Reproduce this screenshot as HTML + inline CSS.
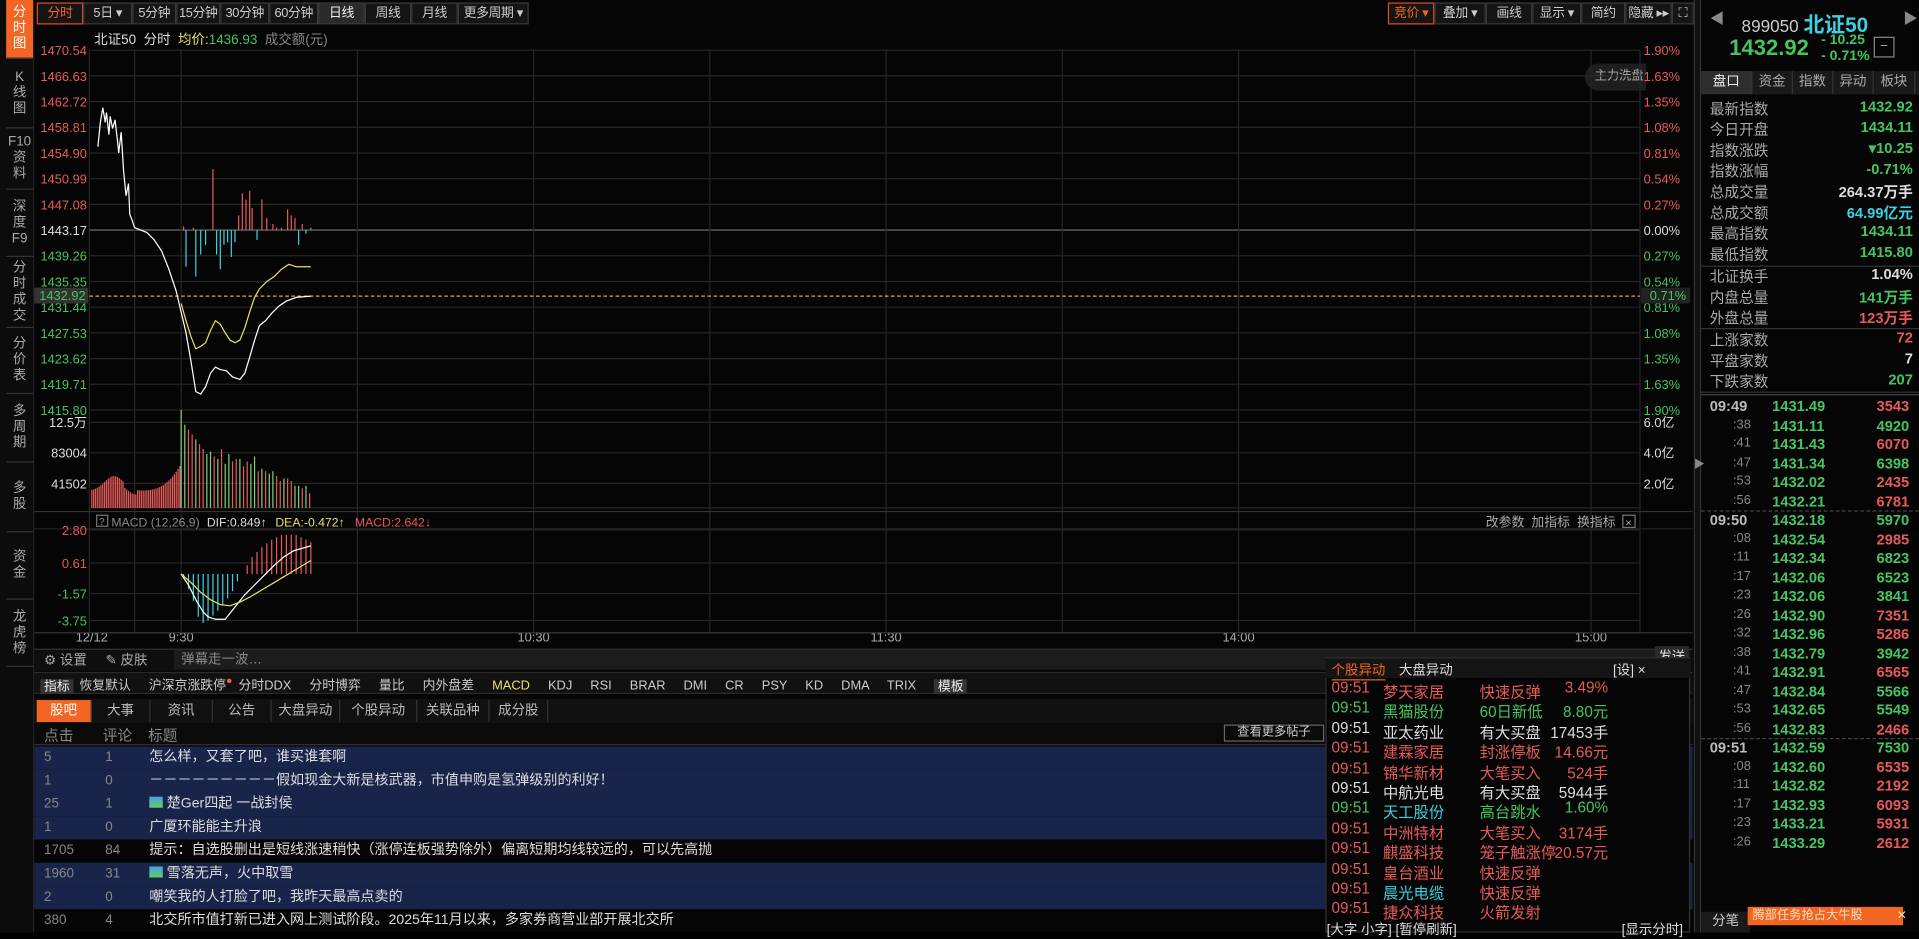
<!DOCTYPE html>
<html><head><meta charset="utf-8">
<style>
*{margin:0;padding:0;box-sizing:border-box}
html,body{width:1919px;height:933px;background:#000;overflow:hidden}
#s{position:absolute;left:0;top:0;width:1568px;height:762px;transform:scale(1.22385);transform-origin:0 0;background:#050505;font-family:"Liberation Sans","Noto Sans CJK SC",sans-serif;font-size:11px;color:#ccc}
.a{position:absolute;white-space:nowrap}
.btn{position:absolute;top:2px;height:18px;line-height:17px;border:1px solid #3a3a3a;background:#151515;color:#ccc;text-align:center;font-size:10.5px;white-space:nowrap;overflow:hidden;letter-spacing:-0.3px}
.side{position:absolute;left:5px;width:22px;border-bottom:1px solid #333;color:#aaa;text-align:center;font-size:11px;line-height:13px;display:flex;flex-direction:column;justify-content:center}
.r{color:#e65a5a}.g{color:#45c560}.w{color:#ddd}.c{color:#3dd0e0}.y{color:#e8e060}.gr{color:#888}
.row{position:absolute;left:28px;width:1355px;height:19px;line-height:19px}
.tab{position:absolute;top:572px;height:18px;line-height:18px;text-align:center;color:#bbb;border-right:1px solid #333}
.rt{position:absolute;top:58px;height:19px;line-height:19px;text-align:center;color:#aaa;border-right:1px solid #333}
</style></head><body><div id="s">
<div class="a" style="left:0;top:0;width:28px;height:762px;background:#0c0c0c;border-right:1px solid #222"></div>
<div class="side" style="top:0;height:48px;background:#f26522;color:#fff">分<br>时<br>图</div>
<div class="side" style="top:48px;height:57px">K<br>线<br>图</div>
<div class="side" style="top:105px;height:50px">F10<br>资<br>料</div>
<div class="side" style="top:155px;height:55px">深<br>度<br>F9</div>
<div class="side" style="top:210px;height:58px">分<br>时<br>成<br>交</div>
<div class="side" style="top:268px;height:54px">分<br>价<br>表</div>
<div class="side" style="top:322px;height:56px">多<br>周<br>期</div>
<div class="side" style="top:378px;height:57px">多<br>股</div>
<div class="side" style="top:435px;height:55px">资<br>金</div>
<div class="side" style="top:490px;height:55px">龙<br>虎<br>榜</div>
<div class="btn" style="left:30px;width:38px;border-color:#e04a2a;color:#f26522">分时</div>
<div class="btn" style="left:68px;width:40px">5日 ▾</div>
<div class="btn" style="left:108px;width:36px">5分钟</div>
<div class="btn" style="left:144px;width:36px">15分钟</div>
<div class="btn" style="left:180px;width:40px">30分钟</div>
<div class="btn" style="left:220px;width:40px">60分钟</div>
<div class="btn" style="left:260px;width:38px;background:#2a2a2a;color:#eee">日线</div>
<div class="btn" style="left:298px;width:38px">周线</div>
<div class="btn" style="left:336px;width:38px">月线</div>
<div class="btn" style="left:374px;width:58px">更多周期 ▾</div>
<div class="btn" style="left:1134px;width:38px;border-color:#e04a2a;color:#f26522">竞价 ▾</div>
<div class="btn" style="left:1172px;width:42px">叠加 ▾</div>
<div class="btn" style="left:1214px;width:38px">画线</div>
<div class="btn" style="left:1252px;width:40px">显示 ▾</div>
<div class="btn" style="left:1292px;width:36px">简约</div>
<div class="btn" style="left:1328px;width:38px">隐藏 ▸▸</div>
<div class="btn" style="left:1366px;width:18px">⛶</div>
<div class="a" style="left:77px;top:24px;color:#ddd">北证50 &nbsp;分时 &nbsp;<span class="y">均价:</span><span class="g">1436.93</span> &nbsp;<span class="gr">成交额(元)</span></div>
<div class="a" style="left:1295px;top:52px;width:50px;height:22px;border-radius:11px 0 0 11px;background:#1e1e1e;color:#aaa;line-height:22px;padding-left:8px;font-size:10px">主力洗盘</div>
<svg class="a" style="left:0;top:0" width="1390" height="535" id="ch"></svg>
<div class="a" style="left:28px;top:530px;width:1355px;height:18px;background:#0e0e0e;border-top:1px solid #333"></div>
<div class="a" style="left:36px;top:531px;color:#aaa">⚙ 设置 &nbsp;&nbsp;&nbsp; ✎ 皮肤</div>
<div class="a" style="left:142px;top:531px;width:1210px;height:16px;background:#1c1c1c;color:#888;padding-left:6px;line-height:16px">弹幕走一波…</div>
<div class="a" style="left:1352px;top:528px;width:28px;height:18px;background:#2a2a2a;color:#ddd;line-height:18px;text-align:center">发送</div>
<div class="a" style="left:28px;top:549px;width:1355px;height:18px;background:#111;border-top:1px solid #2a2a2a;border-bottom:1px solid #2a2a2a"></div>
<div class="a" style="left:33px;top:551px;font-size:10.5px;word-spacing:2px"><span style="background:#333;color:#eee;padding:0 3px">指标</span> 恢复默认 &nbsp; 沪深京涨跌停<sup class="r">●</sup> 分时DDX &nbsp; 分时博弈 &nbsp; 量比 &nbsp; 内外盘差 &nbsp; <span class="y">MACD</span> &nbsp; KDJ &nbsp; RSI &nbsp; BRAR &nbsp; DMI &nbsp; CR &nbsp; PSY &nbsp; KD &nbsp; DMA &nbsp; TRIX &nbsp; <span style="background:#333;color:#eee;padding:0 3px">模板</span></div>
<div class="a" style="left:1352px;top:551px;width:28px;height:14px;border-radius:7px;background:#f26522;color:#fff;font-size:10px;line-height:14px;padding-left:2px">弹 <span style="display:inline-block;width:10px;height:10px;border-radius:5px;background:#fff;vertical-align:-1px"></span></div>
<div class="a" style="left:28px;top:571px;width:1355px;height:20px;background:#111"></div>
<div class="tab" style="left:30px;width:45px;background:#f26522;color:#fff">股吧</div>
<div class="tab" style="left:75px;width:48px">大事</div>
<div class="tab" style="left:123px;width:51px">资讯</div>
<div class="tab" style="left:174px;width:48px">公告</div>
<div class="tab" style="left:222px;width:56px">大盘异动</div>
<div class="tab" style="left:278px;width:63px">个股异动</div>
<div class="tab" style="left:341px;width:59px">关联品种</div>
<div class="tab" style="left:400px;width:48px">成分股</div>
<div class="a" style="left:28px;top:591px;width:1355px;height:18px;background:#0a0a0a;border-bottom:1px solid #333"></div>
<div class="a gr" style="left:36px;top:592px;font-size:12px">点击</div>
<div class="a gr" style="left:84px;top:592px;font-size:12px">评论</div>
<div class="a gr" style="left:121px;top:592px;font-size:12px">标题</div>
<div class="a" style="left:1000px;top:592px;width:82px;height:14px;border:1px solid #666;color:#ccc;font-size:10px;line-height:12px;text-align:center">查看更多帖子</div>
<div class="a" style="left:1352px;top:591px;color:#aaa">表日↓</div>
<div id="posts"></div>
<div class="a" style="left:1370px;top:610px;width:10px;height:150px;background:#1a1a1a"></div>
<div class="a" style="left:1083px;top:537px;width:298px;height:225px;background:#050505;border:1px solid #333"></div>
<div class="a" style="left:1083px;top:538px;width:298px;height:16px;background:#141414"></div>
<div class="a" style="left:1088px;top:539px;color:#f26522;border-bottom:1px solid #f26522">个股异动</div>
<div class="a w" style="left:1143px;top:539px">大盘异动</div>
<div class="a w" style="left:1318px;top:539px">[设] ×</div>
<div id="pop"></div>
<div class="a w" style="left:1084px;top:751px;font-size:11px">[大字 小字] [暂停刷新]</div>
<div class="a w" style="left:1325px;top:751px;font-size:11px">[显示分时]</div>
<div class="a" style="left:1384px;top:0;width:6px;height:762px;background:#111;border-left:1px solid #333;border-right:1px solid #333"></div>
<div class="a gr" style="left:1384px;top:372px;font-size:9px">▶</div>
<div class="a gr" style="left:1397px;top:6px;font-size:12px">◀</div>
<div class="a gr" style="left:1555px;top:6px;font-size:12px">▶</div>
<div class="a" style="left:1423px;top:6px;font-size:14px;color:#ccc">899050 <span style="color:#3dd0e0;font-size:17px;font-weight:bold">北证50</span></div>
<div class="a g" style="left:1413px;top:29px;font-size:18px;font-weight:bold">1432.92</div>
<div class="a g" style="left:1488px;top:27px;font-size:11.5px;line-height:13px;font-weight:bold">- 10.25<br>- 0.71%</div>
<div class="a" style="left:1531px;top:30px;width:17px;height:17px;border:1px solid #888;color:#aaa;text-align:center;line-height:14px">−</div>
<div class="a" style="left:1390px;top:58px;width:178px;height:19px;background:#1a1a1a"></div>
<div class="rt" style="left:1390px;width:42px;background:#2e2e2e;color:#eee">盘口</div>
<div class="rt" style="left:1432px;width:33px">资金</div>
<div class="rt" style="left:1465px;width:33px">指数</div>
<div class="rt" style="left:1498px;width:33px">异动</div>
<div class="rt" style="left:1531px;width:34px">板块</div>
<div id="pk"></div>
<div id="tk"></div>
<div class="a" style="left:1390px;top:745px;width:40px;height:17px;background:#1a1a1a;color:#ccc;text-align:center;line-height:17px">分笔</div>
<div class="a" style="left:1428px;top:741px;width:127px;height:15px;background:#f26522;color:#ffe0c0;font-size:10px;line-height:15px;padding-left:4px">腾部任务抢占大牛股 &nbsp;&nbsp;&nbsp;&nbsp;&nbsp;&nbsp;&nbsp;&nbsp; ✕</div>
</div>
<script>
var R='#e65a5a',G='#45c560',C='#3dd0e0',W='#ddd',Y='#e8e060';
var ch=document.getElementById('ch'),h='';
function L(x1,y1,x2,y2,c,w,d){h+='<line x1="'+x1+'" y1="'+y1+'" x2="'+x2+'" y2="'+y2+'" stroke="'+c+'" stroke-width="'+(w||1)+'"'+(d?' stroke-dasharray="'+d+'"':'')+'/>';}
function T(x,y,t,c,a,s){h+='<text x="'+x+'" y="'+y+'" fill="'+c+'" font-size="'+(s||10.5)+'" text-anchor="'+(a||'start')+'" font-family="Liberation Sans,Noto Sans CJK SC,sans-serif">'+t+'</text>';}
var gc='#262626';
var pl=['1470.54','1466.63','1462.72','1458.81','1454.90','1450.99','1447.08','1443.17','1439.26','1435.35','1431.44','1427.53','1423.62','1419.71','1415.80'];
var pp=['1.90%','1.63%','1.35%','1.08%','0.81%','0.54%','0.27%','0.00%','0.27%','0.54%','0.81%','1.08%','1.35%','1.63%','1.90%'];
for(var i=0;i<15;i++){var y=41+i*21;L(73,y,1340,y,i==7?'#555':gc,i==7?1.3:1);var c=i<7?R:(i==7?W:G);T(71,y+4,pl[i],c,'end');T(1343,y+4,pp[i],c);}
var vx=[73,110,148,292,436,580,724,868,1012,1156,1300,1340];
vx.forEach(function(x){L(x,41,x,517,gc);});
[345,370,395,415].forEach(function(y){L(73,y,1340,y,gc);});
[433,460,485,507,517].forEach(function(y){L(73,y,1340,y,gc);});
L(28,418,1383,418,'#333');L(28,432,1383,432,'#222');
T(71,349,'12.5万',W,'end');T(71,374,'83004',W,'end');T(71,399,'41502',W,'end');
T(1343,349,'6.0亿',W);T(1343,374,'4.0亿',W);T(1343,399,'2.0亿',W);
T(71,437,'2.80',R,'end');T(71,464,'0.61',R,'end');T(71,489,'-1.57',G,'end');T(71,511,'-3.75',G,'end');
h+='<rect x="79" y="421" width="9" height="9" fill="none" stroke="#777"/>';T(81,429,'?','#888',0,8);
T(91,430,'MACD (12,26,9)','#888',0,10);T(169,430,'DIF:0.849↑',W,0,10);T(225,430,'DEA:-0.472↑',Y,0,10);T(290,430,'MACD:2.642↓',R,0,10);
T(1214,430,'改参数 &#160;加指标 &#160;换指标','#aaa');h+='<rect x="1326" y="421" width="10" height="10" fill="none" stroke="#777"/>';T(1328,430,'×','#aaa',0,9);
T(75,524,'12/12','#aaa','middle');['9:30','10:30','11:30','14:00','15:00'].forEach(function(t,i){T([148,436,724,1012,1300][i],524,t,'#aaa','middle');});
L(28,517,1383,517,'#333');
L(73,242,1340,242,'#e8a040',1,'3,2');
h+='<rect x="28" y="235" width="44" height="13" fill="#333"/>';T(70,245,'1432.92',G,'end');
h+='<rect x="1341" y="235" width="40" height="13" fill="#222"/>';T(1348,245,'0.71%',G);
var pv=[[150,-3],[152,30],[158,-2],[160,38],[164,20],[168,12],[174,-50],[177,20],[180,32],[183,12],[186,10],[189,22],[192,10],[195,-12],[198,-30],[201,-25],[204,-32],[206,-18],[210,8],[214,-25],[218,-10],[223,-5],[226,-2],[230,-2],[235,-17],[238,-12],[241,-10],[244,12],[247,-5],[250,3],[254,-2]];
pv.forEach(function(b){var up=b[1]<0;L(b[0],188,b[0],188+b[1],up?R:C,1);});
var wp='80,120 82,100 84,88 86,100 87,92 89,110 90,95 92,105 94,98 96,115 97,125 99,108 101,140 103,160 105,150 106,175 108,180 110,186 115,188 120,190 126,196 132,205 138,220 144,238 148,255 152,272 156,295 160,320 164,322 168,316 172,305 176,300 180,302 185,303 190,308 196,310 200,305 204,292 208,278 212,266 217,262 222,256 228,250 234,246 242,243 254,242';
h+='<polyline points="'+wp+'" fill="none" stroke="#fff" stroke-width="1"/>';
var yp='148,248 152,262 156,275 160,285 164,283 168,280 172,270 176,262 180,265 184,272 188,278 192,280 196,278 200,268 204,255 208,243 212,236 218,230 224,226 230,220 236,216 242,218 254,218';
h+='<polyline points="'+yp+'" fill="none" stroke="'+Y+'" stroke-width="1"/>';
for(var x=75;x<148;x+=1.5){var t=(x-75)/73;var v=14+12*Math.exp(-Math.pow((t-0.25)/0.15,2))+22*Math.pow(Math.max(0,(t-0.5)/0.5),3);if(t>0.35&&t<0.5)v-=4;v=Math.max(v,8);L(x,415,x,415-v,R,1);}
var bv=[[148,80],[151,68],[154,64],[157,60],[160,56],[163,52],[166,48],[169,44],[172,46],[175,42],[178,40],[181,48],[184,36],[187,44],[190,38],[193,40],[196,40],[199,34],[202,38],[205,36],[208,42],[211,30],[214,32],[217,30],[220,28],[223,30],[226,26],[229,22],[232,24],[235,24],[238,22],[241,18],[244,18],[247,16],[250,18],[253,12]];
bv.forEach(function(b,i){L(b[0],415,b[0],415-b[1],(i%3==1||i%4==0)?'#7fd07a':R,1);});
var mb=[[150,-2],[154,-12],[158,-22],[162,-35],[166,-40],[170,-38],[174,-34],[178,-30],[182,-26],[186,-20],[190,-14],[194,-6],[198,0],[202,7],[206,14],[210,18],[214,22],[218,25],[222,28],[226,30],[230,32],[234,32],[238,32],[242,32],[246,30],[250,28],[254,26]];
mb.forEach(function(b){L(b[0],469,b[0],469-b[1],b[1]>0?R:C,1);});
h+='<polyline points="148,469 154,478 160,490 166,500 170,504 176,506 184,506 192,496 200,486 208,478 216,470 224,462 232,455 240,450 254,446" fill="none" stroke="#fff"/>';
h+='<polyline points="148,469 156,476 164,484 172,490 180,494 188,495 196,492 204,488 214,482 224,476 234,470 244,464 254,458" fill="none" stroke="'+Y+'"/>';
ch.innerHTML=h;
var posts=[['5','1','怎么样，又套了吧，谁买谁套啊',1],['1','0','－－－－－－－－－假如现金大新是核武器，市值申购是氢弹级别的利好！',1],['25','1','<span style="display:inline-block;width:11px;height:9px;background:linear-gradient(#4aa0e0,#6c6)"></span> 楚Ger四起 一战封侯',1],['1','0','广厦环能能主升浪',1],['1705','84','提示：自选股删出是短线涨速稍快（涨停连板强势除外）偏离短期均线较远的，可以先高抛',0],['1960','31','<span style="display:inline-block;width:11px;height:9px;background:linear-gradient(#4aa0e0,#6c6)"></span> 雪落无声，火中取雪',1],['2','0','嘲笑我的人打脸了吧，我昨天最高点卖的',1],['380','4','北交所市值打新已进入网上测试阶段。2025年11月以来，多家券商营业部开展北交所',0]];
var ph='';posts.forEach(function(p,i){var t=610+i*19;ph+='<div class="row" style="top:'+t+'px;background:'+(p[3]?'#182449':'#050505')+'"><span class="a gr" style="left:8px">'+p[0]+'</span><span class="a gr" style="left:58px">'+p[1]+'</span><span class="a w" style="left:94px;font-size:11.5px">'+p[2]+'</span><span class="a w" style="left:1326px">-12</span></div>';});
document.getElementById('posts').innerHTML=ph;
var pr=[[R,R,R,R,'梦天家居','快速反弹','3.49%'],[G,G,G,G,'黑猫股份','60日新低','8.80元'],[W,W,W,W,'亚太药业','有大买盘','17453手'],[R,R,R,R,'建霖家居','封涨停板','14.66元'],[R,R,R,R,'锦华新材','大笔买入','524手'],[W,W,W,W,'中航光电','有大买盘','5944手'],[G,C,G,G,'天工股份','高台跳水','1.60%'],[R,R,R,R,'中洲特材','大笔买入','3174手'],[R,R,R,R,'麒盛科技','笼子触涨停','20.57元'],[R,R,R,R,'皇台酒业','快速反弹',''],[R,C,R,R,'晨光电缆','快速反弹',''],[R,R,R,R,'捷众科技','火箭发射','']];
var qh='';pr.forEach(function(p,i){var t=555+i*16.4;qh+='<div class="a" style="left:1088px;top:'+t+'px;font-size:12.5px;color:'+p[0]+'">09:51</div><div class="a" style="left:1130px;top:'+t+'px;font-size:12.5px;color:'+p[1]+'">'+p[4]+'</div><div class="a" style="left:1209px;top:'+t+'px;font-size:12.5px;color:'+p[2]+'">'+p[5]+'</div><div class="a" style="left:1230px;width:84px;text-align:right;top:'+t+'px;font-size:12.5px;color:'+p[3]+'">'+p[6]+'</div>';});
document.getElementById('pop').innerHTML=qh;
var pk=[['最新指数','1432.92',G],['今日开盘','1434.11',G],['指数涨跌','▾10.25',G],['指数涨幅','-0.71%',G],['总成交量','264.37万手',W],['总成交额','64.99亿元',C],['最高指数','1434.11',G],['最低指数','1415.80',G],['北证换手','1.04%',W],['内盘总量','141万手',G],['外盘总量','123万手',R],['上涨家数','72',R],['平盘家数','7',W],['下跌家数','207',G]];
var kh='';pk.forEach(function(p,i){var t=80+i*17+(i>=8?1:0)+(i>=11?1:0);kh+='<div class="a" style="left:1397px;top:'+t+'px;color:#aaa;font-size:12px">'+p[0]+'</div><div class="a" style="left:1460px;width:103px;text-align:right;top:'+t+'px;color:'+p[2]+';font-size:12px;font-weight:bold">'+p[1]+'</div>';});
[217,268,320].forEach(function(y){kh+='<div class="a" style="left:1390px;top:'+y+'px;width:178px;height:1px;background:#333"></div>';});
document.getElementById('pk').innerHTML=kh;
var tk=[['09:49','1431.49','3543',R],[':38','1431.11','4920',G],[':41','1431.43','6070',R],[':47','1431.34','6398',G],[':53','1432.02','2435',R],[':56','1432.21','6781',R],['09:50','1432.18','5970',G],[':08','1432.54','2985',R],[':11','1432.34','6823',G],[':17','1432.06','6523',G],[':23','1432.06','3841',G],[':26','1432.90','7351',R],[':32','1432.96','5286',R],[':38','1432.79','3942',G],[':41','1432.91','6565',R],[':47','1432.84','5566',G],[':53','1432.65','5549',G],[':56','1432.83','2466',R],['09:51','1432.59','7530',G],[':08','1432.60','6535',R],[':11','1432.82','2192',R],[':17','1432.93','6093',R],[':23','1433.21','5931',R],[':26','1433.29','2612',R]];
var th='';tk.forEach(function(p,i){var t=325+i*15.5;var big=p[0].length>3;th+='<div class="a" style="left:'+(big?1397:1416)+'px;top:'+t+'px;color:'+(big?'#bbb':'#888')+';font-size:'+(big?12:10.5)+'px;font-weight:'+(big?'bold':'normal')+'">'+p[0]+'</div><div class="a" style="left:1448px;top:'+t+'px;color:'+G+';font-size:12px;font-weight:bold">'+p[1]+'</div><div class="a" style="left:1510px;width:50px;text-align:right;top:'+t+'px;color:'+p[3]+';font-size:12px;font-weight:bold">'+p[2]+'</div>';});
[322,417,603].forEach(function(y){th+='<div class="a" style="left:1390px;top:'+y+'px;width:178px;height:0;border-top:1px '+(y==322?'solid #444':'dashed #444')+'"></div>';});
document.getElementById('tk').innerHTML=th;
</script>
</body></html>
